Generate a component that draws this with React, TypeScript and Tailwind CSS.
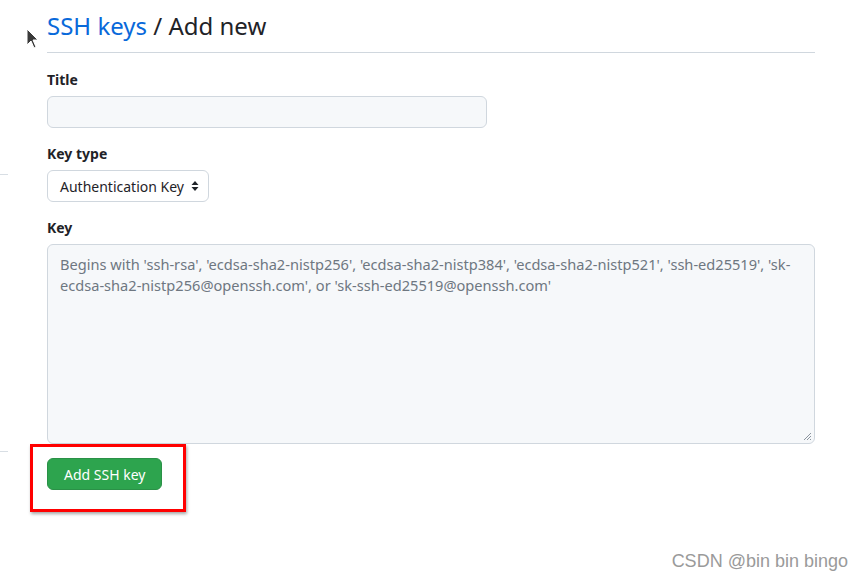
function Cursor() {
  return (
    <svg className="absolute left-[26px] top-[28px]" width="14" height="22" viewBox="0 0 14 22">
      <path d="M1 1 L1 17 L5 13 L8 20 L10 19 L7 12 L12 12 Z" fill="#3a3a3a" stroke="#ffffff" strokeWidth="1" />
    </svg>
  )
}

function SortArrows() {
  return (
    <svg width="8" height="12" viewBox="0 0 8 12" className="ml-[7px] shrink-0">
      <path d="M4 1 L7.5 5 L0.5 5 Z" fill="#1f2328" />
      <path d="M4 11 L7.5 7 L0.5 7 Z" fill="#1f2328" />
    </svg>
  )
}

export default function App() {
  return (
    <div className="relative w-[863px] h-[582px] bg-white overflow-hidden text-[#1f2328]" style={{ fontFamily: '"Noto Sans", "Open Sans", sans-serif' }}>
      <Cursor />
      <div className="absolute left-0 top-[174px] w-[8px] h-px bg-[#d8dee4]" />
      <div className="absolute left-0 top-[451px] w-[8px] h-px bg-[#d8dee4]" />

      <div className="flex flex-col items-start pl-[47px] pr-[48px] pt-[10px]">
        <h1 className="self-stretch text-[24px] leading-[32px] pb-[10px] border-b border-[#d0d7de]">
          <span className="text-[#0969da]">SSH keys</span> / Add new
        </h1>

        <label className="mt-[17px] text-[14px] leading-[20px] font-bold">Title</label>
        <div className="mt-[6px] w-[440px] h-[32px] bg-[#f6f8fa] border border-[#d0d7de] rounded-[6px]" />

        <label className="mt-[16px] text-[14px] leading-[20px] font-bold">Key type</label>
        <div className="mt-[6px] flex items-center h-[32px] pl-[12px] pr-[9px] bg-white border border-[#d0d7de] rounded-[6px] text-[14px] whitespace-nowrap">
          <span>Authentication Key</span>
          <SortArrows />
        </div>

        <label className="mt-[16px] text-[14px] leading-[20px] font-bold">Key</label>
        <div className="relative self-stretch mt-[6px] h-[200px] bg-[#f6f8fa] border border-[#d0d7de] rounded-[6px] pl-[12px] pr-[8px] pt-[9px] text-[14.6px] leading-[21px] text-[#6e7781] whitespace-nowrap">
          Begins with 'ssh-rsa', 'ecdsa-sha2-nistp256', 'ecdsa-sha2-nistp384', 'ecdsa-sha2-nistp521', 'ssh-ed25519', 'sk-
          <br />
          ecdsa-sha2-nistp256@openssh.com', or 'sk-ssh-ed25519@openssh.com'
          <svg className="absolute right-[2px] bottom-[2px]" width="9" height="9" viewBox="0 0 9 9">
            <path d="M8 1 L1 8 M8 4 L4 8 M8 7 L7 8" stroke="#8c959f" strokeWidth="1" />
          </svg>
        </div>

        <div className="relative mt-[14px]">
          <button className="h-[32px] px-[16px] bg-[#2da44e] text-white text-[14px] rounded-[6px] border border-[#2a9147]">
            Add SSH key
          </button>
          <div className="absolute left-[-17px] top-[-14px] w-[156px] h-[68px] border-[3px] border-[#ff0000] shadow-[1px_2px_3px_rgba(0,0,0,0.35)]" />
        </div>
      </div>

      <div className="absolute right-[15px] bottom-[7px] text-[18px] text-[#9a9a9a]" style={{ fontFamily: '"Liberation Sans", Arial, sans-serif' }}>
        CSDN @bin bin bingo
      </div>
    </div>
  )
}
